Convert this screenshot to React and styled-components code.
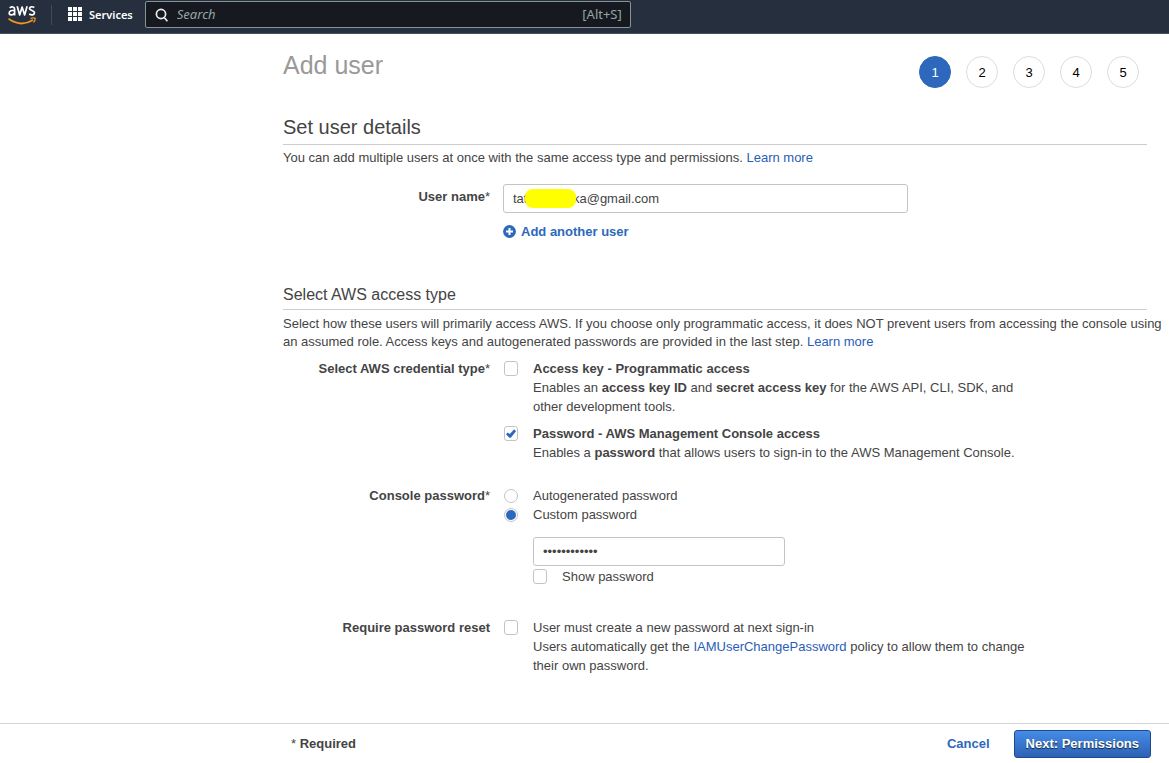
import React, { useState } from "react";
import styled, { createGlobalStyle } from "styled-components";

const GlobalStyle = createGlobalStyle`
  *, *::before, *::after { box-sizing: border-box; }
  body {
    margin: 0;
    background: #fff;
    color: #444;
    font: 13px/19px "Liberation Sans", Arial, sans-serif;
  }
  input, button { font: inherit; color: inherit; }
`;

const Page = styled.div`
  display: flex;
  flex-direction: column;
  min-height: 100vh;
`;

const TopBar = styled.header`
  display: flex;
  align-items: center;
  height: 34px;
  padding: 0 8px 4px;
  background: #252f3e;
  border-bottom: 1px solid #49515e;
  color: #fff;
  font-family: "Noto Sans", "Open Sans", sans-serif;
`;

const LogoLink = styled.a`
  display: flex;
  padding-right: 15px;
  border-right: 1px solid #414b59;
`;

const ServicesButton = styled.button`
  display: flex;
  align-items: center;
  gap: 6px;
  margin: 0 12px 0 16px;
  padding: 0;
  border: 0;
  background: none;
  font-size: 11px;
  font-weight: 600;
  line-height: 20px;
`;

const SearchBox = styled.label`
  display: flex;
  align-items: center;
  flex: 0 1 486px;
  gap: 8px;
  height: 27px;
  padding: 0 8px 0 9px;
  border: 1px solid #879596;
  border-radius: 2px;
  background: #16191f;
  color: #95a5a6;
`;

const SearchInput = styled.input`
  flex: 1;
  min-width: 0;
  padding: 0;
  border: 0;
  outline: 0;
  background: none;
  font-size: 13px;
  &::placeholder { color: #95a5a6; font-style: italic; opacity: 1; }
`;

const Main = styled.main`
  flex: 1;
  padding: 17px 22px 24px 283px;
`;

const TitleRow = styled.div`
  display: flex;
  justify-content: space-between;
  align-items: flex-start;
  padding-right: 8px;
`;

const Title = styled.h1`
  margin: 0;
  color: #999;
  font-size: 25px;
  font-weight: 400;
  line-height: 28px;
`;

const Steps = styled.ol`
  display: flex;
  gap: 15px;
  margin: 5px 0 0;
  padding: 0;
  list-style: none;
`;

const Step = styled.li`
  display: flex;
  align-items: center;
  justify-content: center;
  width: 32px;
  height: 32px;
  border: 1px solid ${(p) => (p.$current ? "#2d68bd" : "#ddd")};
  border-radius: 50%;
  background: ${(p) => (p.$current ? "#2d68bd" : "#fff")};
  color: ${(p) => (p.$current ? "#fff" : "#000")};
`;

const Section = styled.section`
  margin-top: ${(p) => p.$gap}px;
`;

const SectionTitle = styled.h2`
  margin: 0 0 ${(p) => (p.$minor ? 5 : 4)}px;
  padding-bottom: ${(p) => (p.$minor ? 4 : 5)}px;
  border-bottom: 1px solid #ccc;
  font-size: ${(p) => (p.$minor ? 16 : 20)}px;
  font-weight: 400;
  line-height: ${(p) => (p.$minor ? 20 : 24)}px;
`;

const Intro = styled.p`
  margin: 0 -20px 0 0;
  line-height: 18px;
`;

const Link = styled.a`
  color: #2a5db8;
  text-decoration: none;
`;

const FormRow = styled.div`
  display: grid;
  grid-template-columns: 207px minmax(0, 1fr);
  column-gap: 13px;
  margin-top: ${(p) => p.$gap}px;
`;

const RowLabel = styled.div`
  padding-top: ${(p) => (p.$field ? 3 : 0)}px;
  text-align: right;
  font-weight: 700;
`;

const Star = styled.span`
  font-weight: 400;
`;

const Field = styled.div`
  position: relative;
  max-width: ${(p) => p.$width}px;
`;

const TextInput = styled.input`
  display: block;
  width: 100%;
  height: 29px;
  padding: 0 9px;
  border: 1px solid #c4c4c4;
  border-radius: 3px;
  background: #fff;
  outline: 0;
`;

const Redaction = styled.span`
  position: absolute;
  top: 5px;
  left: 22px;
  width: 51px;
  height: 19px;
  border-radius: 8px;
  background: #ff0;
`;

const AddButton = styled.button`
  display: flex;
  align-items: center;
  gap: 5px;
  margin-top: 9px;
  padding: 0;
  border: 0;
  background: none;
  color: #2d68bd;
  font-weight: 700;
`;

const Choice = styled.div`
  display: grid;
  grid-template-columns: 15px minmax(0, 500px);
  column-gap: 14px;
  margin-top: ${(p) => p.$gap || 0}px;
  padding-left: ${(p) => (p.$nested ? 0 : 1)}px;
`;

const ChoiceTitle = styled.label`
  display: block;
  font-weight: ${(p) => (p.$strong ? 700 : 400)};
`;

const Tick = styled.input`
  appearance: none;
  display: grid;
  place-items: center;
  width: 14px;
  height: 15px;
  margin: 2px 0 0;
  border: 1px solid #c4c4c4;
  border-radius: 3px;
  background: #fff;
  &:checked::before {
    content: "";
    width: 10px;
    height: 9px;
    background: #2d68bd;
    clip-path: polygon(0% 58%, 18% 38%, 38% 56%, 82% 4%, 100% 24%, 48% 96%, 34% 96%);
  }
`;

const Radio = styled.input`
  appearance: none;
  display: grid;
  place-items: center;
  width: 14px;
  height: 14px;
  margin: 3px 0 0;
  border: 1px solid #c4c4c4;
  border-radius: 50%;
  background: #fff;
  &:checked::before {
    content: "";
    width: 10px;
    height: 10px;
    border-radius: 50%;
    background: #2d68bd;
  }
`;

const PasswordArea = styled.div`
  margin: 13px 0 0 30px;
`;

const Footer = styled.footer`
  display: flex;
  align-items: center;
  min-height: 40px;
  padding: 0 18px 0 291px;
  border-top: 1px solid #d5d5d5;
  font-weight: 700;
`;

const Required = styled.span`
  flex: 1;
`;

const CancelButton = styled.button`
  margin-right: 24px;
  padding: 0;
  border: 0;
  background: none;
  color: #2d68bd;
  font-weight: 700;
`;

const NextButton = styled.button`
  height: 28px;
  padding: 0 11px;
  border: 1px solid #1d4a8c;
  border-radius: 3px;
  background: linear-gradient(#458ce8, #2c62b5);
  color: #fff;
  font-weight: 700;
  text-shadow: 0 1px 1px #123;
`;

function AwsLogo() {
  return (
    <svg width="28" height="20" viewBox="0 0 28 20" fill="none" role="img" aria-label="AWS">
      <g stroke="#fff" strokeWidth="1.7" strokeLinejoin="round">
        <path d="M1.7 2.9C3.8 1.3 6.6 1.6 6.6 4.2v6.4M6.6 5.7C3.7 5.1 1.2 5.7 1.2 8s3.3 2.7 5.4.3" />
        <path d="M9.2 1.3l2.5 8.6L14.1 2l2.5 7.9 2.5-8.6" />
        <path d="M26.3 2.4c-2-1.1-4.8-.9-4.8 1.2s5 1.7 5 4.1-3.2 2.8-5.3 1.3" />
      </g>
      <path d="M0.5 13.8c8.5 6 17.5 5.5 24.5 1.2" stroke="#f29422" strokeWidth="1.8" />
      <path d="M22.4 13.5c2-.9 5-.6 4.8.1 0 1.4-.7 3-1.7 3.8" stroke="#f29422" strokeWidth="1.3" />
    </svg>
  );
}

function GridIcon() {
  return (
    <svg width="15" height="15" viewBox="0 0 15 15" fill="#fff" aria-hidden="true">
      {[0, 5, 10].map((y) => [0, 5, 10].map((x) => (
        <rect key={x + "-" + y} x={x} y={y} width="4" height="4" />
      )))}
    </svg>
  );
}

function SearchIcon() {
  return (
    <svg width="14" height="14" viewBox="0 0 14 14" fill="none" stroke="#eaeded" strokeWidth="1.7" aria-hidden="true">
      <circle cx="6" cy="6" r="4.6" />
      <path d="M9 9.2l3.4 4" />
    </svg>
  );
}

function PlusIcon() {
  return (
    <svg width="13" height="13" viewBox="0 0 13 13" aria-hidden="true">
      <circle cx="6.5" cy="6.5" r="6.4" fill="#2d68bd" />
      <path d="M6.5 3v7M3 6.5h7" stroke="#fff" strokeWidth="2" />
    </svg>
  );
}

export default function App() {
  const [mode, setMode] = useState("custom");
  const [visible, setVisible] = useState(false);
  return (
    <>
      <GlobalStyle />
      <Page>
        <TopBar>
          <LogoLink href="#"><AwsLogo /></LogoLink>
          <ServicesButton type="button"><GridIcon />Services</ServicesButton>
          <SearchBox>
            <SearchIcon />
            <SearchInput type="text" placeholder="Search" aria-label="Search" />
            <span>[Alt+S]</span>
          </SearchBox>
        </TopBar>
        <Main>
          <TitleRow>
            <Title>Add user</Title>
            <Steps>
              {[1, 2, 3, 4, 5].map((n) => <Step key={n} $current={n === 1}>{n}</Step>)}
            </Steps>
          </TitleRow>

          <Section $gap={27}>
            <SectionTitle>Set user details</SectionTitle>
            <Intro>
              You can add multiple users at once with the same access type and permissions. <Link href="#">Learn more</Link>
            </Intro>
            <FormRow $gap={17}>
              <RowLabel as="label" htmlFor="user" $field>User name<Star>*</Star></RowLabel>
              <div>
                <Field $width={405}>
                  <TextInput id="user" type="text" defaultValue="tatxxxxxxxka@gmail.com" />
                  <Redaction />
                </Field>
                <AddButton type="button"><PlusIcon />Add another user</AddButton>
              </div>
            </FormRow>
          </Section>

          <Section $gap={44}>
            <SectionTitle $minor>Select AWS access type</SectionTitle>
            <Intro>
              Select how these users will primarily access AWS. If you choose only programmatic access, it does NOT prevent users from accessing the console using an assumed role. Access keys and autogenerated passwords are provided in the last step. <Link href="#">Learn more</Link>
            </Intro>
            <FormRow $gap={8}>
              <RowLabel>Select AWS credential type<Star>*</Star></RowLabel>
              <div>
                <Choice>
                  <Tick type="checkbox" id="key" />
                  <div>
                    <ChoiceTitle htmlFor="key" $strong>Access key - Programmatic access</ChoiceTitle>
                    Enables an <b>access key ID</b> and <b>secret access key</b> for the AWS API, CLI, SDK, and other development tools.
                  </div>
                </Choice>
                <Choice $gap={8}>
                  <Tick type="checkbox" id="console" defaultChecked />
                  <div>
                    <ChoiceTitle htmlFor="console" $strong>Password - AWS Management Console access</ChoiceTitle>
                    Enables a <b>password</b> that allows users to sign-in to the AWS Management Console.
                  </div>
                </Choice>
              </div>
            </FormRow>
            <FormRow $gap={24} role="radiogroup" aria-labelledby="console-password">
              <RowLabel id="console-password">Console password<Star>*</Star></RowLabel>
              <div>
                <Choice>
                  <Radio type="radio" name="mode" id="auto" checked={mode === "auto"} onChange={() => setMode("auto")} />
                  <ChoiceTitle htmlFor="auto">Autogenerated password</ChoiceTitle>
                </Choice>
                <Choice>
                  <Radio type="radio" name="mode" id="custom" checked={mode === "custom"} onChange={() => setMode("custom")} />
                  <ChoiceTitle htmlFor="custom">Custom password</ChoiceTitle>
                </Choice>
                <PasswordArea>
                  <Field $width={252}>
                    <TextInput type={visible ? "text" : "password"} defaultValue="abcdefghijkl" aria-label="Custom password" />
                  </Field>
                  <Choice $nested $gap={1}>
                    <Tick type="checkbox" id="show" checked={visible} onChange={() => setVisible(!visible)} />
                    <ChoiceTitle htmlFor="show">Show password</ChoiceTitle>
                  </Choice>
                </PasswordArea>
              </div>
            </FormRow>
            <FormRow $gap={32}>
              <RowLabel>Require password reset</RowLabel>
              <Choice>
                <Tick type="checkbox" id="reset" />
                <div>
                  <ChoiceTitle htmlFor="reset">User must create a new password at next sign-in</ChoiceTitle>
                  Users automatically get the <Link href="#">IAMUserChangePassword</Link> policy to allow them to change their own password.
                </div>
              </Choice>
            </FormRow>
          </Section>
        </Main>
        <Footer>
          <Required><Star>*</Star> Required</Required>
          <CancelButton type="button">Cancel</CancelButton>
          <NextButton type="button">Next: Permissions</NextButton>
        </Footer>
      </Page>
    </>
  );
}
